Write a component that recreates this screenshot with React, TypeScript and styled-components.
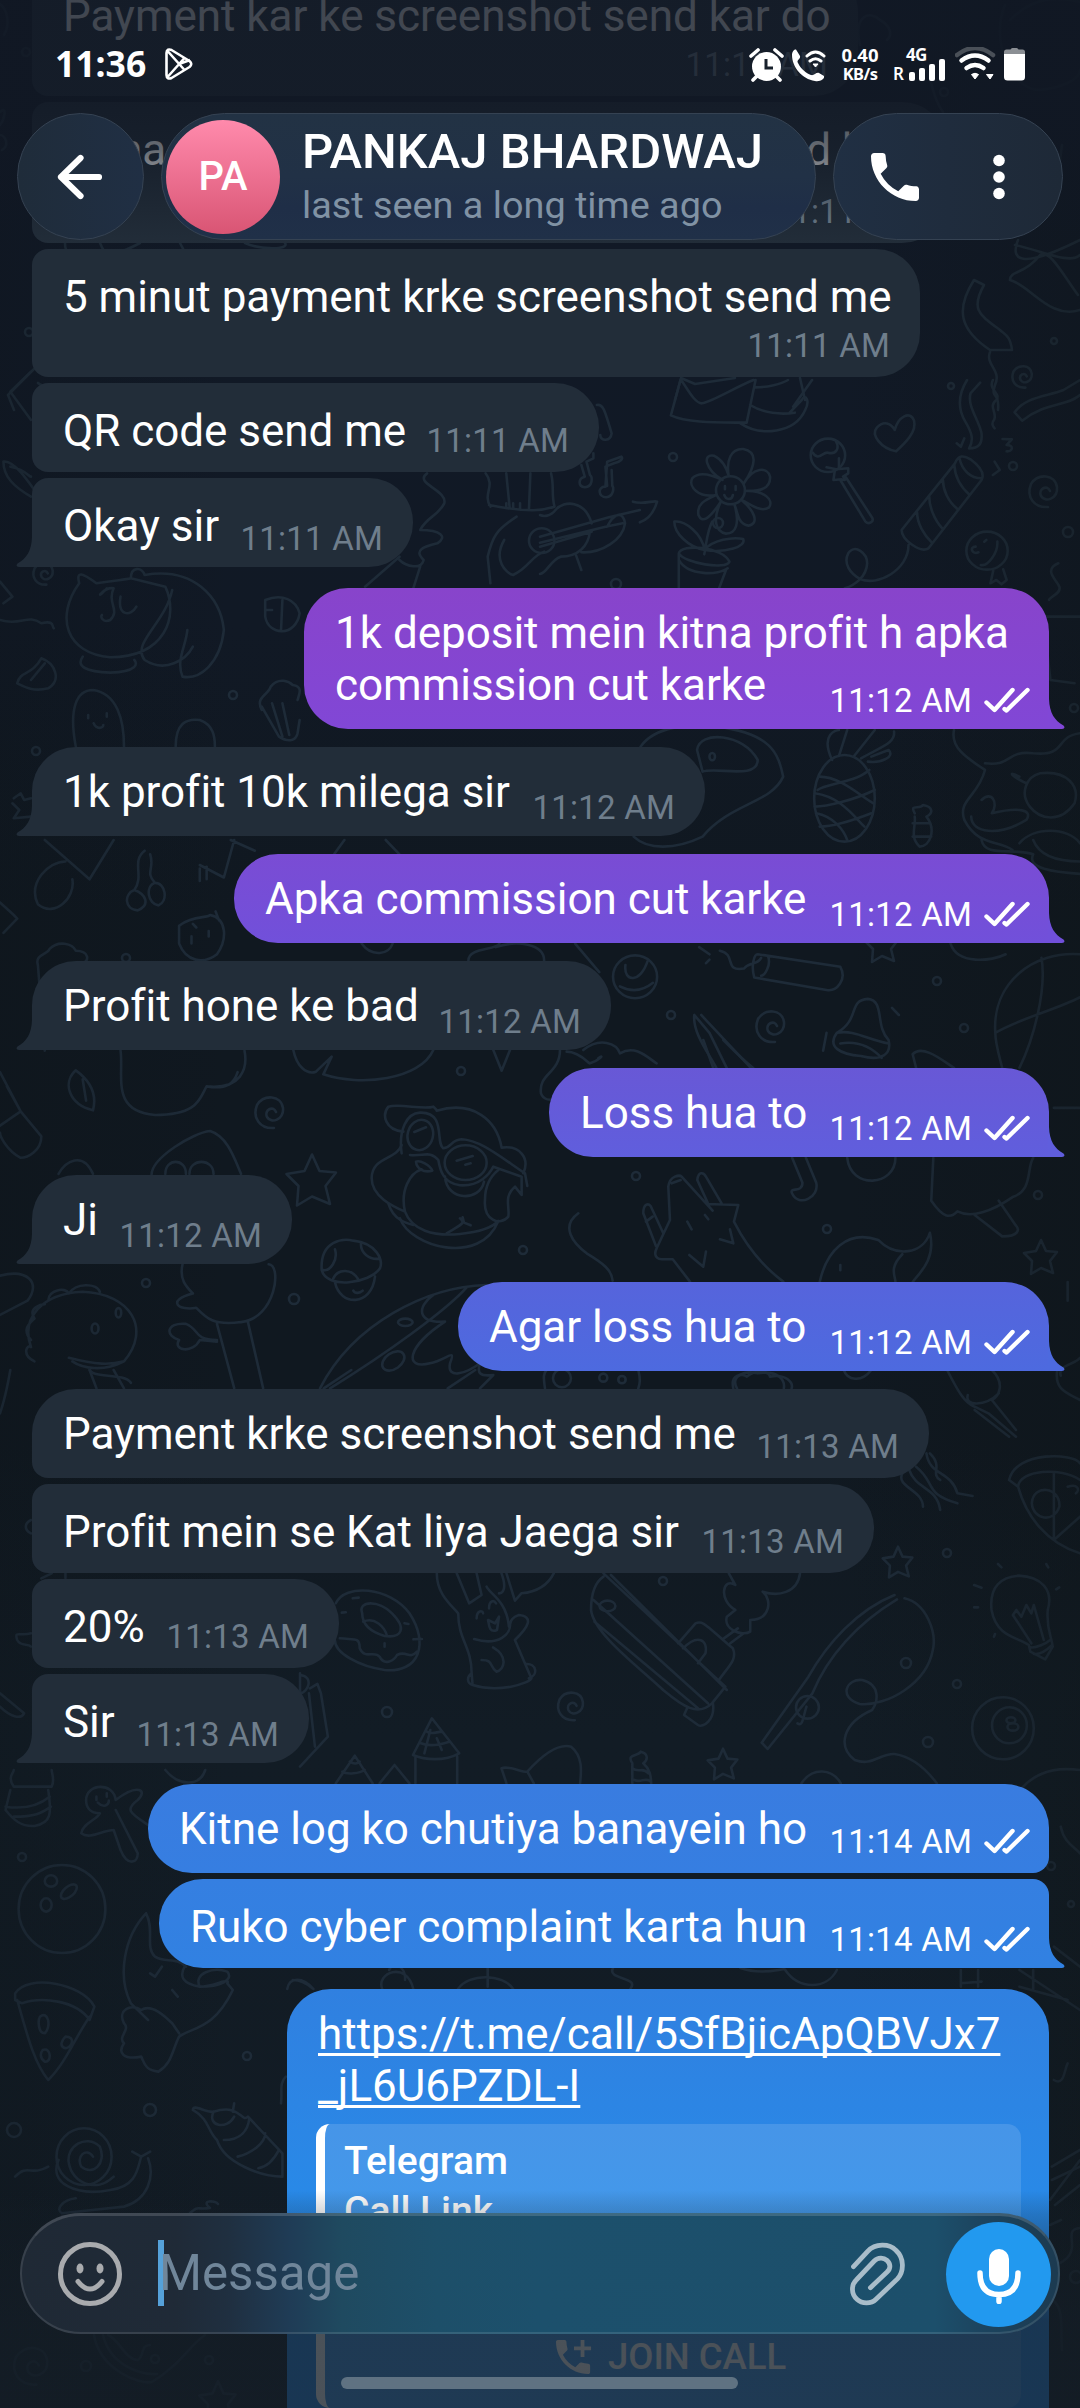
import React from "react";
import styled, { createGlobalStyle } from "styled-components";

const GlobalStyle = createGlobalStyle`
  body { margin: 0; background: #101821; }
  * { box-sizing: border-box; }
`;

const Screen = styled.main`
  position: relative;
  width: 1080px;
  height: 2408px;
  overflow: hidden;
  background: linear-gradient(180deg, #111927 0%, #111925 26%, #101820 38%, #101820 60%, #121c25 72%, #121b24 100%);
  color: #fff;
  font-family: Roboto, "Noto Sans", sans-serif;
`;

const Wallpaper = styled.svg`
  position: absolute;
  inset: 0;
  width: 1080px;
  height: 2408px;
  fill: none;
  stroke: #1e2b38;
  stroke-width: 2.6;
  stroke-linecap: round;
  stroke-linejoin: round;
  & * { vector-effect: non-scaling-stroke; }
`;

const EdgeShade = styled.div`
  position: absolute;
  inset: 0;
  pointer-events: none;
  background: linear-gradient(90deg, rgba(12, 18, 22, 0.22) 0%, transparent 22%, transparent 78%, rgba(14, 20, 22, 0.32) 100%);
`;

const Messages = styled.section`
  position: relative;
  display: flex;
  flex-direction: column;
  padding: 0 31px 0 32px;
  margin-top: -32px;
`;

type BubbleProps = {
  $out?: boolean;
  $w: number;
  $h: number;
  $gap: number;
  $first?: boolean;
  $last?: boolean;
  $from?: string;
  $to?: string;
};

const Bubble = styled.article<BubbleProps>`
  position: relative;
  flex: none;
  display: flex;
  justify-content: space-between;
  align-self: ${(p) => (p.$out ? "flex-end" : "flex-start")};
  width: ${(p) => p.$w}px;
  height: ${(p) => p.$h}px;
  margin-top: ${(p) => p.$gap}px;
  padding: ${(p) => (p.$first ? 19 : 22)}px ${(p) => (p.$out ? 19 : 30)}px ${(p) => (p.$last ? 8 : 11)}px 31px;
  background: ${(p) => (p.$out ? `linear-gradient(180deg, ${p.$from}, ${p.$to})` : "#222d39")};
  border-radius: ${(p) =>
    p.$out
      ? `44px ${p.$first ? 44 : 16}px ${p.$last ? 0 : 16}px 44px`
      : `${p.$first ? 44 : 16}px 44px 44px ${p.$last ? 0 : 16}px`};
`;

const TailShape = styled.svg<{ $out?: boolean }>`
  position: absolute;
  bottom: 0;
  width: 17px;
  height: 30px;
  ${(p) => (p.$out ? "right: -16px; transform: scaleX(-1);" : "left: -16px;")}
`;

const Text = styled.p`
  margin: 0;
  font-size: 44px;
  line-height: 52px;
  letter-spacing: -0.02px;
  white-space: nowrap;
  font-variant-ligatures: common-ligatures;
`;

const Meta = styled.div<{ $out?: boolean; $over?: boolean }>`
  display: flex;
  align-self: flex-end;
  gap: 12px;
  height: 40px;
  margin-left: ${(p) => (p.$over ? -260 : 0)}px;
  font-size: 33px;
  line-height: 40px;
  letter-spacing: 0.22px;
  white-space: nowrap;
  color: ${(p) => (p.$out ? "#fff" : "#6f7e8c")};
`;

const TickIcon = styled.svg`
  width: 46px;
  height: 26px;
  margin-top: 6px;
  fill: none;
  stroke: #fff;
  stroke-width: 4.4;
  stroke-linecap: round;
  stroke-linejoin: round;
`;

const Ticks = () => (
  <TickIcon viewBox="0 0 46 26">
    <path d="M2.5 15.5 10.500 23 28.500 3M20.500 22 22.500 23.500 43.5 3" />
  </TickIcon>
);

const Tail = ({ out, color }: { out?: boolean; color: string }) => (
  <TailShape $out={out} viewBox="0 0 17 30">
    <path fill={color} d="M17 0H16C15.500 14 10.500 21.500 1.500 26.500Q-1 29.500 3 30H17Z" />
  </TailShape>
);

type Msg = {
  lines: string[];
  time: string;
  w: number;
  h?: number;
  gap: number;
  out?: boolean;
  first?: boolean;
  last?: boolean;
  below?: boolean;
  from?: string;
  to?: string;
};

const messages: Msg[] = [
  { lines: ["5 minut payment krke screenshot send me"], time: "11:11 AM", w: 888, h: 128, gap: 6, below: true },
  { lines: ["QR code send me"], time: "11:11 AM", w: 567, gap: 6 },
  { lines: ["Okay sir"], time: "11:11 AM", w: 381, gap: 6, last: true },
  { lines: ["1k deposit mein kitna profit h apka", "commission cut karke"], time: "11:12 AM", w: 745, h: 141, gap: 21, out: true, first: true, last: true, from: "#8844cb", to: "#8147d6" },
  { lines: ["1k profit 10k milega sir"], time: "11:12 AM", w: 673, gap: 18, first: true, last: true },
  { lines: ["Apka commission cut karke"], time: "11:12 AM", w: 815, gap: 18, out: true, first: true, last: true, from: "#7a4cd4", to: "#7150da" },
  { lines: ["Profit hone ke bad"], time: "11:12 AM", w: 579, gap: 18, first: true, last: true },
  { lines: ["Loss hua to"], time: "11:12 AM", w: 500, gap: 18, out: true, first: true, last: true, from: "#6858d6", to: "#605edd" },
  { lines: ["Ji"], time: "11:12 AM", w: 260, gap: 18, first: true, last: true },
  { lines: ["Agar loss hua to"], time: "11:12 AM", w: 591, gap: 18, out: true, first: true, last: true, from: "#5664dc", to: "#4d6adf" },
  { lines: ["Payment krke screenshot send me"], time: "11:13 AM", w: 897, gap: 18, first: true },
  { lines: ["Profit mein se Kat liya Jaega sir"], time: "11:13 AM", w: 842, gap: 6 },
  { lines: ["20%"], time: "11:13 AM", w: 307, gap: 6 },
  { lines: ["Sir"], time: "11:13 AM", w: 277, gap: 6, last: true },
  { lines: ["Kitne log ko chutiya banayein ho"], time: "11:14 AM", w: 901, gap: 21, out: true, first: true, from: "#397ce0", to: "#367ee1" },
  { lines: ["Ruko cyber complaint karta hun"], time: "11:14 AM", w: 890, gap: 6, out: true, last: true, from: "#357fe1", to: "#3181e2" },
];

const HiddenLine = styled(Text)`
  display: flex;
  width: 100%;
  padding-left: 55px;
`;

const FarWord = styled.span`
  margin-left: 640px;
`;

const BelowTime = styled(Meta)`
  position: absolute;
  right: 30px;
  bottom: 11px;
`;

const LinkBubble = styled.article`
  flex: none;
  display: flex;
  flex-direction: column;
  align-self: flex-end;
  width: 762px;
  height: 460px;
  margin-top: 21px;
  padding: 19px 28px 0 29px;
  border-radius: 44px 44px 0 44px;
  background: linear-gradient(180deg, #3080e0, #288ae8 50%);
`;

const LinkText = styled.a`
  padding-left: 2px;
  font-size: 44px;
  line-height: 52px;
  color: #fff;
  white-space: pre;
  text-decoration: underline;
  text-decoration-thickness: 2.5px;
  text-decoration-skip-ink: none;
  text-underline-offset: 4px;
`;

const Preview = styled.div`
  display: flex;
  flex-direction: column;
  height: 284px;
  margin-top: 12px;
  padding: 12px 0 0 19px;
  border-left: 9px solid #fff;
  border-radius: 14px;
  background: rgba(255, 255, 255, 0.13);
  font-size: 39px;
  font-weight: 500;
  line-height: 50px;
`;

const JoinRow = styled.div`
  display: flex;
  align-items: center;
  gap: 16px;
  margin: 96px 0 0 212px;
  font-size: 36.5px;
  line-height: 50px;
`;

const JoinIcon = styled.svg`
  width: 36px;
  height: 36px;
  fill: #fff;
`;

const TopFade = styled.div`
  position: absolute;
  inset: 0 0 auto;
  height: 245px;
  background: linear-gradient(180deg, rgba(17, 24, 36, 0.8) 0, rgba(17, 24, 36, 0.78) 105px, rgba(17, 24, 36, 0.64) 150px, rgba(17, 24, 36, 0.2) 215px, transparent 245px);
`;

const BottomFade = styled.div`
  position: absolute;
  inset: 2190px 0 0;
  background: linear-gradient(180deg, transparent 0, rgba(20, 29, 38, 0.2) 25px, rgba(20, 29, 38, 0.77) 130px, rgba(20, 29, 38, 0.77) 100%);
`;

const StatusBar = styled.header`
  position: absolute;
  inset: 0 0 auto;
  display: flex;
  align-items: center;
  height: 128px;
  padding: 0 55px 0 55px;
  font-family: "Noto Sans", "Open Sans", sans-serif;
  font-weight: 700;
`;

const Clock = styled.span`
  width: 110px;
  font-size: 35.500px;
  font-weight: 700;
  line-height: 50px;
  margin-top: -2px;
`;

const PlayIcon = styled.svg`
  width: 28px;
  height: 32px;
  fill: none;
  stroke: #fff;
  stroke-width: 3;
  stroke-linejoin: round;
`;

const StatusIcons = styled.svg`
  width: 78px;
  height: 34px;
  margin: 1px 13px 0 auto;
  fill: #fff;
`;

const Rate = styled.div`
  display: flex;
  flex-direction: column;
  align-items: center;
  width: 40px;
  margin: 0 13px 0 0;
  font-size: 18.500px;
  line-height: 19px;
  white-space: nowrap;
  & > span + span { font-size: 16.500px; letter-spacing: -0.6px; }
`;

const Signal = styled.div`
  display: flex;
  flex-direction: column;
  width: 52px;
  margin-right: 10px;
  font-size: 17px;
  line-height: 19px;
`;

const Network = styled.span`
  margin-left: 13px;
  letter-spacing: -0.6px;
`;

const Bars = styled.span`
  display: flex;
  align-items: flex-end;
  gap: 4px;
  height: 19px;
  font-weight: 600;
`;

const Bar = styled.i<{ $h: number }>`
  width: 6px;
  height: ${(p) => p.$h}px;
  margin-bottom: 2px;
  border-radius: 2px;
  background: #fff;
  &:first-of-type { margin-left: 1px; }
`;

const PowerIcons = styled.svg`
  width: 70px;
  height: 34px;
`;

const Header = styled.header`
  position: absolute;
  inset: 113px 17px auto;
  display: flex;
  gap: 17px;
  height: 127px;
`;

const Glass = styled.div`
  display: flex;
  align-items: center;
  border: 1.5px solid #354252;
  border-radius: 64px;
  background: linear-gradient(90deg, #203044, #1f2e44);
`;

const Back = styled(Glass)`
  justify-content: center;
  width: 127px;
  background: linear-gradient(90deg, #1f2c3a, #202f44);
`;

const Profile = styled(Glass)`
  width: 655px;
  padding-left: 4px;
  background: linear-gradient(180deg, #223244 0%, #213146 50%, #1f2e47 75%, #203048 100%);
`;

const Actions = styled(Glass)`
  width: 230px;
  padding-left: 29px;
  gap: 66px;
  background: linear-gradient(90deg, #202f43, #1e2937);
`;

const Avatar = styled.div`
  display: grid;
  place-items: center;
  width: 114px;
  height: 114px;
  margin-right: 22px;
  border-radius: 50%;
  background: linear-gradient(180deg, #ff8aac, #d95574);
  font-size: 40px;
  font-weight: 500;
`;

const Names = styled.div`
  display: flex;
  flex-direction: column;
  padding-top: 2px;
`;

const Name = styled.h1`
  margin: 0;
  font-size: 49px;
  font-weight: 500;
  line-height: 56px;
  white-space: nowrap;
`;

const Seen = styled.span`
  font-size: 37.8px;
  line-height: 51px;
  color: #8092a4;
  white-space: nowrap;
`;

const ArrowIcon = styled.svg`
  width: 50px;
  height: 50px;
  fill: none;
  stroke: #fff;
  stroke-width: 6.2;
  stroke-linecap: round;
  stroke-linejoin: round;
`;

const CallIcon = styled.svg`
  width: 64px;
  height: 64px;
  fill: #fff;
`;

const DotsIcon = styled.svg`
  width: 12px;
  height: 46px;
  fill: #fff;
`;

const Composer = styled.footer`
  position: absolute;
  left: 20px;
  right: 20px;
  top: 2213px;
  display: flex;
  align-items: center;
  height: 121px;
  padding: 0 7px 0 35px;
  border: 2px solid rgba(255, 255, 255, 0.11);
  border-top: 3px solid rgba(255, 255, 255, 0.15);
  border-radius: 61px;
  background: linear-gradient(90deg, #1f2935 0%, #1f2a37 15%, #1f2f40 20%, #1f3c56 26%, #1f4a60 31%, #1d4f69 40%, #1c506c 50%, #1c4f6b 88%, #1c4560 92%, #1c3a50 100%) border-box;
`;

const Smile = styled.svg`
  width: 66px;
  height: 66px;
  fill: none;
  stroke: #a9abae;
  stroke-width: 5;
  stroke-linecap: round;
`;

const Caret = styled.i`
  width: 6px;
  height: 66px;
  margin: -2px 0 0 35px;
  background: #55a1d9;
`;

const Field = styled.span`
  flex: 1;
  margin: -3px 0 0 -5px;
  font-size: 49.200px;
  line-height: 60px;
  color: #70869a;
`;

const Clip = styled.svg`
  width: 58px;
  height: 64px;
  margin-right: 39px;
  fill: none;
  stroke: #a9bdca;
  stroke-width: 4.800;
  stroke-linecap: round;
`;

const MicButton = styled.div`
  display: grid;
  place-items: center;
  width: 105px;
  height: 105px;
  border-radius: 50%;
  background: #2299ef;
`;

const MicIcon = styled.svg`
  width: 45px;
  height: 56px;
  margin-top: 3px;
`;

const HomeBar = styled.div`
  position: absolute;
  left: 341px;
  top: 2377px;
  width: 397px;
  height: 12px;
  border-radius: 6px;
  background: #5f7282;
`;

const star = "M0-17 5-6 16-5 9 4 12 16 0 11-10 17-9 4-17-4-5-6Z";
const spiral = "M4 2C1-5-8 0-5 7-1 14 12 10 11-2 9-15-8-16-15-5-20 8-12 19 2 18";

const at = (x: number, y: number, sx: number, sy: number) => `translate(${x} ${y}) scale(${sx} ${sy})`;

const Doodles = () => (
  <Wallpaper viewBox="0 0 1080 2408">
    {[
      [718, 523, 5], [673, 457, 4], [951, 386, 3], [1013, 466, 4], [1068, 532, 5], [616, 584, 5], [461, 1071, 4], [636, 1176, 4],
      [523, 1250, 4], [294, 1299, 5], [126, 958, 4], [671, 1015, 4], [937, 981, 4], [964, 1028, 4], [1038, 1195, 4], [827, 1229, 4],
      [146, 1283, 4], [663, 1581, 4], [906, 1663, 5], [957, 1684, 4], [928, 1742, 5], [387, 1712, 5], [947, 1553, 4], [22, 1857, 4],
      [247, 2056, 4], [150, 2110, 6], [14, 2130, 7], [1071, 1904, 3], [1051, 1866, 4], [26, 52, 4], [29, 332, 4], [944, 92, 4],
      [1054, 341, 3], [86, 2366, 5], [155, 2359, 4], [209, 2360, 4], [36, 751, 4], [233, 695, 4], [1074, 708, 4], [1076, 2277, 6],
    ].map(([x, y, r]) => <circle key={`${x}-${y}`} cx={x} cy={y} r={r} />)}
    {[[1041, 1257, 1], [898, 1562, 0.9], [723, 1764, 0.9], [882, 945, 1], [218, 2400, 1.1], [312, 1180, 1.5]].map(([x, y, s]) => (
      <path key={`${x}-${y}`} d={star} transform={at(x, y, s, s)} />
    ))}
    {[[1046, 489, 1], [272, 1110, 1], [773, 1024, 1], [573, 1704, 0.9], [34, 2363, 1.2], [45, 572, 0.7], [1024, 375, 0.7]].map(([x, y, s]) => (
      <path key={`${x}-${y}`} d={spiral} transform={at(x, y, s, s)} />
    ))}
    {/* party, flower, guitar */}
    <g transform={at(540, 380, 0.3444, 0.3333)}>
      <path d="M408 0 380 106C430 130 520 127 600 128L626 0M410 0C430 30 450 70 470 70 500 65 570 20 620 0M582 130C640 170 740 160 770 90 785 60 770 40 760 60L725 98M610 75C650 100 700 105 740 98M790 0 735 80M626 22C660 22 700 12 720 0" />
      <path d="M1034 214C990 205 960 165 978 143 998 120 1020 130 1030 150 1040 110 1075 90 1086 122 1095 155 1060 190 1034 214Z" />
      <circle cx="836" cy="226" r="50" />
      <path d="M792 218C810 245 820 215 836 218 860 225 870 205 860 185M832 262 860 268 895 265 895 280 880 290C890 300 885 302 876 298L852 300 856 272M872 300 945 425C955 435 970 425 965 414L888 292M868 235V265" />
      <path d="M1205 250C1215 225 1230 225 1250 238 1285 265 1290 285 1282 300L1128 505C1105 520 1050 480 1050 450ZM1218 235C1225 270 1250 295 1282 295M1203 255C1205 290 1220 320 1248 345M1170 300C1170 330 1185 365 1213 388M1130 348C1130 380 1145 420 1168 445M1095 398C1095 430 1115 465 1138 488M1070 495C1070 570 980 620 930 597 900 580 880 550 895 520 915 490 950 520 950 550 948 590 915 615 885 625" />
      <path d="M1240 0C1210 50 1215 90 1235 125 1255 160 1260 180 1246 205 1275 205 1285 190 1282 160 1275 120 1240 80 1250 40L1278 8M1315 0C1300 30 1340 40 1325 60 1300 80 1330 100 1318 120 1310 130 1315 140 1320 145M1210 190 1222 200 1232 175M1343 177 1370 178 1355 195C1375 195 1375 215 1355 214M1320 245 1335 270 1315 285M1568 45C1530 80 1470 65 1400 122L1378 97C1410 50 1470 50 1520 30L1568 0" />
      <ellipse cx="1298" cy="512" rx="60" ry="57" />
      <path d="M1328 485C1330 520 1300 560 1280 555M1316 572 1308 610 1325 600 1340 613 1355 600 1345 568M1265 500C1245 500 1255 525 1273 517M1290 485 1296 480M1505 550C1460 570 1500 600 1508 620 1515 640 1480 650 1478 660" />
      <circle cx="553" cy="331" r="42" />
      <path d="M548 288C540 240 555 205 590 207 630 215 630 250 592 310 620 260 660 260 668 290 670 325 640 335 596 333 650 330 680 360 665 382 640 400 610 370 585 360 620 390 640 430 605 437 575 432 575 400 565 375 580 430 570 460 540 461 510 455 500 420 525 365 490 420 470 430 460 405 455 370 480 360 512 345 460 355 430 320 442 295 460 275 490 280 530 300 480 270 470 220 505 227 530 240 540 260 548 288M537 318V328M568 318V330M535 345C540 362 558 360 560 345" />
      <path d="M500 425C485 455 485 480 477 523M478 510C430 500 390 460 390 425 420 420 470 460 478 510 500 480 560 470 590 477 600 500 540 520 478 510M403 520C410 490 530 500 550 545 540 570 420 550 403 520ZM403 520V625M403 540C430 590 520 585 545 565M540 570 520 625" />
      <path d="M0 470 200 412 290 390M0 488 190 440 240 430M0 500 150 455M270 365C300 375 330 360 340 365 330 400 310 420 290 427M150 430C130 360 70 360 45 390 30 410 10 410 0 405M145 455C140 500 110 530 60 530 30 540 20 580 0 582M120 517C180 520 240 480 247 430 240 390 215 400 195 440M105 527 120 570" />
      <circle cx="5" cy="482" r="37" />
      <path d="M195 318 190 260 215 250C235 245 243 235 236 230L195 245 190 320C165 320 170 352 192 352 215 350 215 320 210 318L208 270M165 75C185 70 190 100 208 160 205 185 175 185 175 165M120 255 130 290C110 295 110 320 130 322 155 320 152 290 145 285L135 245 155 235 155 220" />
    </g>
    {/* mascot, mushroom, leaf, cactus */}
    <g transform={at(280, 1040, 0.3333, 0.3333)}>
      <path d="M470 212C580 180 650 240 665 323 720 315 750 355 730 400M370 275C315 270 305 225 325 200 360 190 430 210 460 200L472 212M365 315C350 360 275 350 275 415 275 470 340 500 375 515M375 515C360 450 390 400 425 388M375 515C395 570 460 590 540 582M540 582C610 575 640 560 655 543M360 535C390 620 600 680 655 543M408 365C420 360 450 375 457 392 430 400 410 385 408 365Z" />
      <ellipse cx="421" cy="285" rx="38" ry="46" transform="rotate(15 421 285)" />
      <ellipse cx="557" cy="368" rx="63" ry="52" />
      <path d="M365 340C355 270 380 220 420 218 500 215 465 310 490 325 520 320 510 300 545 298 600 300 660 350 735 400L742 438M390 345C430 350 450 330 475 360 480 390 490 430 540 436 600 440 630 400 640 380L725 410V465L705 440C670 470 690 500 685 530 660 560 610 540 615 480 615 440 630 410 655 390M495 410C500 485 600 485 612 425M530 362 578 348M403 276 438 262M556 374 572 370M325 490C340 540 380 550 400 555M540 535C560 550 540 555 500 580M548 532 552 548 572 556" />
      <path d="M125 690C120 600 190 595 220 602 290 610 310 660 300 685 270 730 140 750 125 690ZM165 727C180 800 275 800 285 710M160 715C175 685 215 685 235 718M243 608C240 640 270 660 298 656M165 628C175 660 150 695 130 690M220 752C225 762 240 760 248 752" />
      <path d="M120 1045C220 850 440 740 620 735M150 1045C320 940 500 810 560 742M460 765C410 800 410 850 495 845 380 920 370 990 450 970 500 960 530 920 510 970 500 1020 560 1000 600 970 590 1000 600 1010 640 1005L600 1045" />
      <ellipse cx="376" cy="847" rx="22" ry="11" /><ellipse cx="340" cy="963" rx="37" ry="24" transform="rotate(-35 340 963)" />
      <path d="M895 520C840 560 880 610 920 640 970 670 995 690 998 722M1178 658H1145C1120 655 1125 635 1130 625L1170 540 1165 440C1170 405 1200 405 1205 410L1298 512 1280 492 1375 495 1362 545C1400 620 1450 680 1510 725M1180 660 1230 725M1128 618 1090 520C1090 490 1105 490 1112 498L1150 580M1283 488 1252 420C1255 395 1270 395 1278 410L1325 490M1222 545 1235 568M1275 525 1285 538M1228 645 1270 680 1278 635M1320 598 1360 610 1350 568M1175 430 1202 420M1098 545 1118 530" />
      <path d="M40 30C50 80 80 105 108 95L155 50 130 103C240 140 420 120 460 30M640 30 665 92 690 30M783 160C775 100 840 100 840 30M860 35C900 35 930 75 930 70 960 60 975 40 955 55M910 30C960-10 1010 10 1020 40 1070 10 1110 60 1130 70M783 160C790 180 810 180 820 178M1270 0 1300 84M1330 0C1380 50 1400 70 1420 84" />
      <path d="M795 1045C790 1010 790 1000 800 990M1075 990C1082 1020 1080 1030 1075 1045M1360 1045C1350 1000 1390 1000 1400 1010 1440 980 1470 1000 1470 1010 1520 1000 1540 1030 1535 1045" />
      <circle cx="846" cy="1015" r="27" /><circle cx="970" cy="1013" r="12" /><circle cx="1026" cy="1019" r="11" />
    </g>
    {/* donut, bunny, ship, rod, bulb */}
    <g transform={at(300, 1560, 0.4975, 0.3333)}>
      <path d="M72 130C90 70 180 80 220 160 260 250 240 340 170 330 120 320 70 280 70 240M125 160C115 120 160 120 185 160 215 205 205 235 170 228 140 215 125 190 125 160ZM127 185C150 170 170 200 175 228M80 235C110 240 120 230 120 265 130 300 150 270 160 290 170 320 190 300 195 285 215 270 220 300 235 275M106 115 118 113M210 190 218 192M84 158 92 157M170 250V260M228 238 245 237" />
      <path d="M275 40C275 100 300 130 318 160 318 240 345 260 345 340L347 375C400 400 460 370 465 355L432 240C460 200 470 170 440 165 420 175 425 190 420 200 415 120 380 100 375 80M315 40 340 130 365 105 355 40M405 40C415 80 410 100 400 100M415 40 432 122 445 100C480 95 500 70 510 40M350 237C400 260 425 220 422 190M388 262C420 290 410 330 395 335 380 320 390 300 365 300M345 340C335 350 335 370 347 375M455 312C475 310 480 345 460 355M355 175C355 150 368 150 368 160M380 145C380 120 390 120 394 130M378 180 392 190 400 170 396 210C380 220 380 195 378 180" />
      <path d="M610 40 855 380 828 430C800 470 770 440 730 390 680 320 590 220 585 150 585 110 590 70 610 50M625 45 858 390M590 120 820 430M592 185 800 445M760 250 795 190C810 180 815 195 870 265 880 300 860 320 842 360M770 265C800 220 820 240 815 280L800 310M852 235 880 205 M865 250 892 220M830 430C835 480 810 505 800 495L772 465 778 445M862 40 875 75C850 50 840 120 875 150L858 170C850 210 890 230 905 215L905 180C945 180 950 120 930 95C960 110 1000 100 1005 40" />
      <circle cx="618" cy="138" r="16" />
      <path d="M928 548 1022 350C1060 250 1120 150 1195 105M940 567 1030 400C1060 290 1120 190 1200 118M928 548 940 567M1215 115C1260 130 1280 220 1272 270 1260 370 1180 440 1125 432 1080 410 1100 355 1130 360 1170 375 1160 430 1150 450 1090 490 1080 560 1115 600 1150 620 1165 580 1195 582 1230 590 1260 630 1280 670M1000 490C1010 500 1010 480 1018 440" />
      <ellipse cx="1020" cy="442" rx="23" ry="34" />
      <path d="M1465 255C1440 230 1400 230 1390 150 1385 80 1410 50 1445 47 1490 50 1515 90 1503 150 1500 210 1510 225 1513 260L1498 298 1468 275ZM1470 250 1433 165 1440 150 1450 170 1460 135 1470 160 1475 135 1495 240M1403 12 1410 22M1500 12 1504 22M1355 75 1370 83M1355 142H1363M1395 230 1397 222M1520 88 1526 82M1468 262C1480 265 1500 250 1508 240M1475 282C1490 285 1505 265 1512 255" />
      <ellipse cx="1413" cy="505" rx="62" ry="93" /><ellipse cx="1426" cy="496" rx="35" ry="54" />
      <circle cx="1429" cy="481" r="9" /><circle cx="1433" cy="501" r="11" />
      <path d="M72 670 110 587 146 670M160 670 190 615 220 670M227 585 265 475 320 580C290 605 250 600 227 585ZM232 592V670M316 590V670M255 515C265 525 275 515 285 515M243 550C260 560 280 555 300 545M262 510 250 580M275 535 285 570M85 635C95 645 120 640 130 630M100 605C110 615 115 610 120 605M405 625C420 615 450 640 457 635 490 580 520 550 545 560 570 590 565 640 563 670M405 625 415 670M457 635 470 670M668 610C655 580 680 590 685 575 700 580 700 600 690 610M668 612V670M668 625C680 640 690 620 700 640M672 660C685 670 695 650 705 665M690 610C705 630 705 650 706 670M1008 670C1030 620 1070 625 1087 670M1450 685C1490 620 1540 625 1568 630M0 345C30 350 15 400 0 400M20 385 35 372 42 400 56 530 0 620M18 400 30 560M0 340V400" />
    </g>
    {/* left side: dog, vegetables, pineapple */}
    <g transform={at(0, 370, 0.6888, 0.3333)}>
      <path d="M45 5 15 65 45 150M5 275C20 270 40 330 60 390M15 290C40 300 40 320 45 320M5 275C5 320 20 350 45 380M115 640C110 600 120 610 140 640 170 630 180 630 190 625L240 650C260 740 240 860 160 862 95 850 80 740 115 640ZM190 625C190 590 205 590 210 615 280 590 320 680 325 780 320 880 290 930 265 920 255 870 270 830 272 780M250 660C240 760 190 820 210 870 240 910 270 870 280 830M155 655C135 700 150 650 165 655 155 700 175 720 160 750 150 760 145 740 148 735M175 680C170 740 190 740 198 710M120 860C110 890 125 905 160 908 200 905 200 880 195 870M0 750C30 770 40 730 60 760 80 750 75 770 78 775M0 635 18 680 5 700M25 940C30 900 45 920 60 865 80 880 90 930 70 955 50 965 40 955 25 940ZM45 930 65 880M385 690C410 670 430 690 435 730 430 800 390 800 385 740ZM410 690 408 780M385 720H395M110 1130C100 1020 110 960 135 960 170 970 180 1050 180 1130M128 1035V1045M155 1030V1040M136 1060C140 1080 150 1075 150 1065M255 1130C255 1060 270 1045 290 1050 310 1065 312 1100 312 1130M380 1020C370 980 390 975 393 950 405 920 420 935 425 945 440 950 435 970 432 990M380 1010 405 1100C420 1120 430 1110 432 1090L435 1050M395 1000 410 1100M410 1000 420 1095" />
      <path d="M705 310C720 350 700 370 712 410M735 310 740 415M770 310 768 415M735 400V415M745 400V415M755 400V415M710 405C770 430 790 420 805 410 800 370 805 350 800 310M620 310C600 340 650 360 645 400 635 440 620 440 610 480 640 480 650 500 635 520 615 530 600 540 615 570 612 600 590 590 580 570M580 560 530 650M610 590 600 655M712 640 708 560C715 500 720 480 750 440M732 510C715 570 735 610 745 615 770 590 770 560 790 545" />
      <path d="M930 1130C950 1070 1000 1060 1040 1070 1120 1090 1130 1150 1137 1220 1120 1300 1060 1300 1020 1400 980 1440 940 1440 920 1400M1012 1140C1015 1080 1080 1090 1100 1170 1100 1230 1040 1190 1020 1205Z" />
      <ellipse cx="1034" cy="1160" rx="4" ry="11" />
      <ellipse cx="1226" cy="1285" rx="44" ry="130" />
      <path d="M1208 1170C1190 1090 1215 1080 1218 1080M1218 1158 1230 1080M1240 1158 1270 1080M1250 1165C1280 1130 1300 1120 1298 1085M1260 1175C1280 1180 1300 1160 1290 1140L1265 1160M1190 1220C1220 1220 1250 1280 1268 1300M1183 1270C1220 1280 1240 1340 1255 1370M1185 1330C1210 1340 1225 1380 1230 1410M1262 1200C1240 1240 1200 1240 1187 1260M1270 1260C1240 1290 1200 1310 1183 1310M1265 1330C1240 1350 1210 1370 1190 1370M1385 1080C1380 1130 1400 1160 1430 1200 1420 1280 1390 1290 1400 1350 1420 1430 1450 1410 1470 1440M1430 1180C1470 1190 1460 1140 1500 1150 1550 1160 1530 1100 1568 1090M1490 1240C1470 1220 1460 1200 1480 1220M1425 1290C1440 1260 1450 1300 1440 1330 1480 1310 1500 1320 1490 1350 1450 1400 1410 1390 1410 1340M1510 1210C1550 1200 1568 1250 1560 1300 1540 1360 1510 1350 1495 1310 1480 1270 1490 1220 1510 1210M1480 1420C1500 1370 1550 1370 1568 1420M1328 1330C1320 1300 1335 1320 1340 1305 1355 1310 1355 1330 1345 1340 1360 1380 1350 1430 1335 1430 1320 1400 1330 1370 1328 1340M1325 1360H1350M1325 1400H1352M20 1285 30 1270 35 1290 45 1285M18 1300 28 1320 20 1345 45 1340M1500 740H1568M1515 745 1525 930 1560 940" />
    </g>
    {/* middle: fruit, firecracker, bell, rocket */}
    <g transform={at(0, 840, 0.6888, 0.3571)}>
      <path d="M65 0 130 110 165 0M95 60C70 60 40 120 55 180 80 220 110 160 105 110M210 30C190 60 210 100 195 140M218 40C225 80 210 90 225 120M195 140C180 150 180 195 200 197 220 180 210 150 195 140ZM225 120C210 130 215 180 230 183 245 170 240 120 225 120ZM340 0 325 105 290 70M335 0 370 30M290 80V115M300 75V110M485 40 500 0M560 0 580 40M260 240C280 210 300 220 305 210 330 220 330 280 315 320 295 350 270 340 260 290ZM313 200 318 225M278 270V290M303 255V270M280 235 285 245M525 290C540 330 565 320 570 290M55 350C50 320 70 320 72 305 85 280 105 290 110 310 130 310 130 340 120 345M55 350 65 590M680 338C680 300 720 310 725 290M720 300C750 280 790 290 790 338M835 290 870 370" />
      <ellipse cx="922" cy="383" rx="32" ry="60" />
      <path d="M908 350C905 400 930 400 940 340M900 410C920 430 935 420 948 400M1015 300 1030 320M1045 310C1070 320 1050 370 1080 360 1090 340 1100 350 1105 330M1025 345 1030 335M1100 320 1220 355C1230 390 1215 425 1200 420L1095 385C1090 350 1095 320 1100 320ZM1115 325C1120 350 1110 380 1105 380M1260 445C1230 450 1250 500 1215 540 1200 580 1220 600 1250 605 1280 620 1295 600 1290 560 1270 520 1285 450 1260 445ZM1215 540C1240 530 1260 560 1290 570M1220 570C1250 560 1270 590 1280 610M1200 540 1195 590M1295 470 1305 490M1008 490 1030 540 1055 638M1018 490 1090 638M1008 490C1005 540 1030 600 1040 638M1325 600C1340 570 1370 620 1385 638M1325 600 1330 638M1445 540C1440 400 1500 310 1568 320M1445 540C1445 570 1450 600 1455 638M1512 330C1520 420 1500 560 1480 638M1445 540C1480 500 1540 470 1568 440M0 175 20 210 25 220 5 260M110 645C90 680 100 740 135 757 140 720 135 680 110 645ZM120 670 125 730M175 590C180 660 160 760 225 770 290 770 290 720 300 690 350 700 360 640 355 590M300 690C330 700 340 680 345 650M0 650 30 760 60 830C60 870 40 890 30 890 10 870 0 830 0 820M10 690 30 760M0 800 30 760M220 938C220 890 280 820 305 815 330 830 340 890 350 935M240 935C240 890 270 890 270 935M275 935C275 890 310 890 310 935M85 935C95 900 120 870 135 935M0 1220C40 1200 60 1240 40 1290 20 1310 0 1330 0 1330M45 1420C30 1340 60 1270 120 1265 190 1270 220 1370 180 1460 150 1490 120 1480 105 1460M100 1450C140 1470 160 1470 180 1460M130 1480C130 1510 180 1490 190 1520M70 1290C70 1260 95 1250 100 1270 110 1240 140 1240 145 1265M50 1340C40 1310 60 1300 65 1300M45 1400C30 1370 45 1350 50 1340M50 1460C30 1440 40 1410 45 1420M265 1188C260 1230 270 1250 280 1270 240 1290 260 1320 285 1310 300 1340 310 1360 350 1350 400 1340 410 1190 390 1188M315 1355 340 1535M360 1350 382 1535M315 1400C280 1400 290 1370 270 1355 240 1350 240 1390 260 1400 250 1430 280 1440 290 1400L315 1405" />
      <ellipse cx="138" cy="1368" rx="5" ry="14" /><ellipse cx="172" cy="1324" rx="4" ry="13" />
      <path d="M1150 890 1165 960C1165 990 1145 970 1150 990 1160 1030 1190 1000 1185 960L1170 890M1230 890C1235 980 1300 970 1300 890M1355 890 1352 1010C1370 1060 1380 1060 1390 1040 1410 1060 1440 1040 1470 1000 1500 980 1490 920 1500 890M1415 1050 1455 1110C1480 1110 1480 1090 1475 1080L1450 1010M1190 1238C1200 1150 1230 1090 1275 1120 1300 1170 1340 1160 1350 1100 1360 1180 1330 1220 1325 1238M1310 1160C1290 1200 1300 1220 1300 1238M1220 1190V1205M1550 1238V1290M1530 750H1568M1540 1500C1535 1470 1560 1470 1568 1450M1380 290C1390 350 1440 340 1460 320M1425 0C1430 50 1470 20 1500 40 1490 80 1530 90 1568 95M1500 0C1510 50 1540 60 1568 60" />
    </g>
    {/* jellyfish, pizza */}
    <g transform={at(0, 1370, 0.6888, 0.3333)}>
      <path d="M130 0 140 55M165 0 180 55M470 55 510 0M650 55 690 0M1070 55C1060 20 1080 0 1100 10 1130 0 1140 30 1138 55M1225 0C1230 30 1250 40 1265 0M1375 0C1390 60 1400 100 1415 110L1435 130 1475 200M1440 0C1460 40 1450 80 1440 90L1475 180M1415 120 1465 200M1405 75C1400 110 1430 110 1450 70M1310 310C1300 350 1340 360 1340 410M1320 300C1330 360 1360 350 1365 420M1330 290C1360 340 1340 370 1390 400M1345 250C1350 320 1380 300 1390 370L1412 378M1350 250C1370 290 1350 310 1365 330M1465 330C1475 240 1560 250 1568 280M1465 330 1478 350C1480 300 1540 290 1568 330M1478 350C1490 440 1520 520 1568 550M1530 310V510L1568 440M1498 400C1500 340 1540 350 1538 410 1530 460 1500 450 1498 400ZM1550 350C1565 340 1568 360 1562 370M45 450C35 460 35 480 45 490M45 790C30 800 20 780 25 810 30 830 40 820 45 830M0 970 35 1030C30 1050 15 1040 0 1010M15 0C10 60 5 100 0 130M1535 0C1530 60 1550 70 1568 90M75 610 60 625M95 610V625" />
    </g>
    {/* gingerbread, bowling ball, moon, snail, popsicle */}
    <g transform={at(0, 1770, 0.6888, 0.3333)}>
      <path d="M20 50C10 20 20 10 20 0M20 50 75 50C80 30 75 10 75 0M15 60 8 120C20 150 30 170 50 168 75 160 75 130 70 60M8 110C40 120 60 100 72 80M20 140C50 140 60 130 74 110M125 90C125 40 165 35 168 90 200 40 215 60 200 90 180 120 190 130 215 165M168 120 200 250C200 280 185 290 175 240L165 180C150 180 130 210 118 190 120 160 140 150 145 130 130 130 125 110 125 90M140 80V90M155 70V80M142 98C150 115 158 105 158 92M240 0C260 50 290 50 298 0" />
      <ellipse cx="90" cy="417" rx="63" ry="132" /><ellipse cx="74" cy="333" rx="9" ry="17" /><ellipse cx="100" cy="365" rx="9" ry="23" transform="rotate(20 100 365)" /><ellipse cx="67" cy="405" rx="8" ry="20" />
      <path d="M212 430C180 500 170 620 190 700L215 750M212 430C225 480 210 530 225 560 240 580 255 560 270 590M268 590C260 620 265 640 290 650 310 650 335 620 330 640L338 660C310 780 280 770 260 800 250 840 250 880 230 905 210 900 210 880 205 860 180 870 170 850 180 820 170 800 190 780 180 760 170 720 190 700 205 720 220 700 240 740 250 760L260 790M290 650C280 610 310 590 330 605 340 630 320 650 290 650M218 610 225 620 235 590M250 660 258 680M22 690 32 700C60 680 110 690 130 750L137 710C120 640 40 610 22 670ZM25 690C40 800 50 880 70 930 95 880 110 800 130 740M58 740C70 720 75 770 65 790 55 790 55 750 58 740ZM95 800C110 800 105 830 95 835 85 830 90 810 95 800ZM62 840C75 830 75 880 65 875 58 865 58 850 62 840Z" />
      <ellipse cx="122" cy="1160" rx="40" ry="85" />
      <path d="M135 1160C125 1130 110 1160 118 1190 135 1220 155 1180 145 1130 125 1090 95 1130 100 1180 105 1240 140 1270 165 1220M85 1170C70 1240 110 1280 160 1260 200 1250 200 1190 205 1160M205 1160 192 1145M205 1160 218 1145M215 1165C225 1220 215 1290 180 1310L90 1330C80 1320 90 1290 110 1285M22 1220C40 1180 45 1220 70 1190M280 1020C280 1000 300 1030 310 1025 350 1000 350 1060 360 1040L410 1150V1220C380 1220 325 1180 315 1110 300 1080 305 1050 280 1020ZM310 1025C300 1070 330 1080 340 1040M325 1110C350 1110 360 1080 362 1045M345 1160C365 1150 385 1120 385 1090M375 1195C390 1190 400 1160 405 1140M338 1025 340 1000M417 657C420 620 440 620 455 657M455 657C440 630 430 630 425 630M555 657C545 610 590 570 600 657M565 600C570 570 590 590 588 630M665 657C680 610 730 610 745 657M708 594V650M890 594C880 630 930 620 915 657M1075 594C1110 620 1140 590 1140 600 1160 660 1200 660 1215 600M1395 640 1425 635M1395 600V650M1420 600V650M1480 600 1568 720M1480 650 1550 690M1500 600V660M1530 930C1545 950 1545 900 1550 880M1568 590 1530 530M1527 1190 1568 1140M1527 1230 1568 1190M408 1000C410 960 405 940 415 920M1540 170C1545 220 1560 230 1568 250" />
    </g>
    <path d="M190 2213C200 2205 195 2210 210 2208 200 2200 215 2200 218 2204M94 2335C100 2370 140 2385 152 2382 180 2365 190 2345 205 2335M103 2335C110 2365 140 2375 157 2374M108 2335C120 2340 125 2360 138 2360 145 2355 140 2345 150 2345M1050 2200 1080 2160M1055 2205 1080 2185M1050 2225 1061 2220M1080 2228C1060 2230 1085 2250 1060 2263M1053 2300C1065 2310 1060 2330 1062 2350M0 4C8 10 10 25 4 35M0 112C8 105 4 120 0 125M0 135C5 135 10 145 2 150M860 45C853 15 870 10 880 20 890 25 893 35 887 40M920 60C935 80 930 95 943 112M1062 145 1058 175M1015 245C1040 250 1070 265 1080 255M1018 240C1010 260 1020 270 1080 240M1010 280C1010 270 1025 275 1040 255 1050 250 1060 270 1078 295M1010 280C1030 285 1050 320 1080 310M974 280C955 310 960 330 990 350M974 280 984 285C970 310 980 315 1000 330M990 350H1012C1010 335 1005 335 1000 330M990 352C985 365 1002 370 995 385 990 400 1000 390 998 410M8 395 34 369M8 395 14 410M38 383C45 390 55 380 60 400M65 243C65 255 75 265 85 262M100 243C105 255 108 260 140 243M180 243 190 262M245 243C260 250 290 250 285 243M675 400 681 378 695 384 735 378M800 378 805 400" />
    <path d="M1005 5C990 40 1010 90 1040 90 1060 88 1080 80 1080 70M1010 20C1030 0 1050-5 1080 2" strokeOpacity=".6" />
  </Wallpaper>
);

export default function App() {
  return (
    <Screen>
      <GlobalStyle />
      <Doodles />
      <EdgeShade />
      <Messages>
        <Bubble $w={826} $h={128} $gap={0}>
          <Text>Payment kar ke screenshot send kar do</Text>
          <BelowTime>11:11 AM</BelowTime>
        </Bubble>
        <Bubble $w={914} $h={141} $gap={6}>
          <HiddenLine>
            <span>na</span>
            <FarWord>d k</FarWord>
          </HiddenLine>
          <BelowTime>11:11 AM</BelowTime>
        </Bubble>
        {messages.map((m, i) => (
          <Bubble key={i} $out={m.out} $w={m.w} $h={m.h ?? 89} $gap={m.gap} $first={m.first} $last={m.last} $from={m.from} $to={m.to}>
            <Text>
              {m.lines.map((line, n) => (
                <React.Fragment key={line}>
                  {n > 0 && <br />}
                  {line}
                </React.Fragment>
              ))}
            </Text>
            {m.below ? (
              <BelowTime>{m.time}</BelowTime>
            ) : (
              <Meta $out={m.out} $over={m.lines.length > 1}>
                {m.time}
                {m.out && <Ticks />}
              </Meta>
            )}
            {m.last && <Tail out={m.out} color={m.out ? m.to! : "#222d39"} />}
          </Bubble>
        ))}
        <LinkBubble>
          <LinkText>{"https://t.me/call/5SfBjicApQBVJx7\n_jL6U6PZDL-I"}</LinkText>
          <Preview>
            <span>Telegram</span>
            <span>Call Link</span>
            <JoinRow>
              <JoinIcon viewBox="3 2.500 19 19">
                <path d="M20 15.500c-1.250 0-2.450-.2-3.570-.57-.35-.11-.75-.03-1.020.24l-2.200 2.200a15.050 15.050 0 0 1-6.590-6.580l2.200-2.210c.28-.26.36-.65.25-1A11.360 11.360 0 0 1 8.500 4c0-.55-.45-1-1-1H4c-.55 0-1 .45-1 1 0 9.390 7.610 17 17 17 .55 0 1-.45 1-1v-3.500c0-.55-.45-1-1-1zM16 3h2v3.500h3.500v2H18V12h-2V8.500h-3.500v-2H16z" />
              </JoinIcon>
              <span>JOIN CALL</span>
            </JoinRow>
          </Preview>
        </LinkBubble>
      </Messages>
      <TopFade />
      <BottomFade />

      <StatusBar>
        <Clock>11:36</Clock>
        <PlayIcon viewBox="0 0 28 32">
          <path d="M1.500 5C1.500 1.500 4 .8 6.500 2L24.500 13Q28 16 24.500 19L6.500 30C4 31.200 1.500 30.500 1.500 27ZM3 3.500 19.500 22M3 28.500 19.500 10M14 16 25 12" strokeWidth="2.600" />
        </PlayIcon>
        <StatusIcons viewBox="0 0 78 34">
          <circle cx="17.500" cy="18.500" r="14.500" />
          <path d="M2 8 9 2M33 8 26 2M4 32 9 27M31 32 26 27" stroke="#fff" strokeWidth="3.600" strokeLinecap="round" />
          <path d="M17 11V20H24" stroke="#18212c" strokeWidth="3" fill="none" />
          <path d="M47 1.500 51 8C52 11 47 12 49 15 52 21 57 25 62 27 65 28 67 24 70 25L75 28C76 31 71 34 66 33 53 31 43 19 43 7 43 4 45 1 47 1.500Z" />
          <path d="M58 8Q66.500 0 75 8M61 13Q66.500 8.500 72 13" fill="none" stroke="#fff" strokeWidth="3" strokeLinecap="round" />
          <path d="M64 16H69L66.500 19Z" stroke="#fff" strokeLinejoin="round" />
        </StatusIcons>
        <Rate>
          <span>0.40</span>
          <span>KB/s</span>
        </Rate>
        <Signal>
          <Network>4G</Network>
          <Bars>
            R<Bar $h={9} /><Bar $h={13} /><Bar $h={17} /><Bar $h={22} />
          </Bars>
        </Signal>
        <PowerIcons viewBox="0 0 70 34">
          <path d="M2 8Q20-6 38 8" fill="none" stroke="#4a5058" strokeWidth="4.500" strokeLinecap="round" />
          <path d="M6.500 13.500Q20 3.500 33.500 13.500M11.500 21Q20 15 28.500 21" fill="none" stroke="#fff" strokeWidth="4.500" strokeLinecap="round" />
          <path d="M16.500 27.500Q20 25 23.500 27.500L20 32ZM31.500 27.500H38L35 32Z" fill="#fff" stroke="#fff" strokeLinejoin="round" />
          <path d="M49 7V5Q49 2.500 51.500 2.500H55.500Q56 1 57.500 1H61.500Q63 1 63.500 2.500H67.500Q70 2.500 70 5V7Z" fill="#8b8f94" />
          <path d="M49 7H70V30Q70 33.500 66.500 33.500H52.500Q49 33.500 49 30Z" fill="#fff" />
        </PowerIcons>
      </StatusBar>

      <Header>
        <Back>
          <ArrowIcon viewBox="0 0 50 50">
            <path d="M43 25H5M24.500 6 5 25 24.500 44" />
          </ArrowIcon>
        </Back>
        <Profile>
          <Avatar>PA</Avatar>
          <Names>
            <Name>PANKAJ BHARDWAJ</Name>
            <Seen>last seen a long time ago</Seen>
          </Names>
        </Profile>
        <Actions>
          <CallIcon viewBox="0 0 24 24">
            <path d="M20 15.500c-1.250 0-2.450-.2-3.570-.57-.35-.11-.75-.03-1.020.24l-2.200 2.200a15.050 15.050 0 0 1-6.590-6.580l2.200-2.210c.28-.26.36-.65.25-1A11.360 11.360 0 0 1 8.500 4.200c0-.8-.5-1.200-1.200-1.200H4.200c-.7 0-1.200.5-1.200 1.200 0 9.200 7.610 16.800 16.800 16.800.7 0 1.200-.5 1.200-1.200v-3.100c0-.7-.4-1.200-1-1.200z" />
          </CallIcon>
          <DotsIcon viewBox="0 0 12 46">
            <circle cx="6" cy="6.500" r="5.800" />
            <circle cx="6" cy="23" r="5.800" />
            <circle cx="6" cy="39.500" r="5.800" />
          </DotsIcon>
        </Actions>
      </Header>

      <Composer>
        <Smile viewBox="0 0 66 66">
          <circle cx="33" cy="33" r="29.500" />
          <path d="M21 40.500Q33 55.500 45 40.500" />
          <ellipse cx="23" cy="27.500" rx="3.500" ry="5" fill="#a9abae" stroke="none" />
          <ellipse cx="43" cy="27.500" rx="3.500" ry="5" fill="#a9abae" stroke="none" />
        </Smile>
        <Caret />
        <Field>Message</Field>
        <Clip viewBox="904 215 168 192" preserveAspectRatio="none">
          <path vectorEffect="non-scaling-stroke" d="M917 289 958 243C980 219 1020 219 1040 240 1064 262 1064 303 1045 325L983 386C968 402 941 401 927 387 910 371 910 344 925 329L977 272C988 261 1004 261 1014 270 1025 280 1025 295 1015 304L966 352" />
        </Clip>
        <MicButton>
          <MicIcon viewBox="0 0 45 56">
            <rect x="13" y="1" width="20" height="37" rx="10" fill="#fff" />
            <path d="M4 25Q4 46.500 23 46.500T42 25M23 47V53.500" fill="none" stroke="#fff" strokeWidth="5.500" strokeLinecap="round" />
          </MicIcon>
        </MicButton>
      </Composer>
      <HomeBar />
    </Screen>
  );
}
